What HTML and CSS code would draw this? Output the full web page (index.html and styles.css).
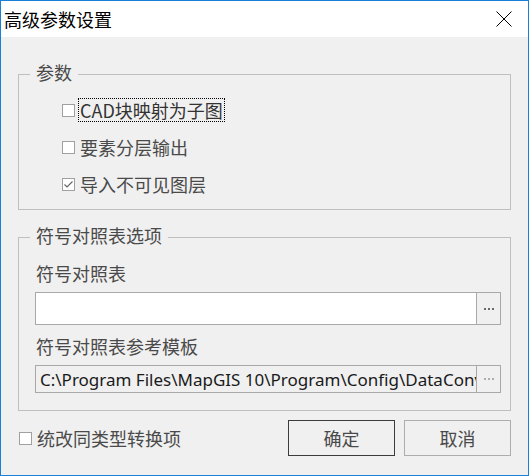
FILE: index.html
```html
<!DOCTYPE html>
<html lang="zh-CN">
<head>
<meta charset="utf-8">
<title>高级参数设置</title>
<link rel="stylesheet" href="styles.css">
</head>
<body>
<div class="window">
  <div class="titlebar">
    <span class="title">高级参数设置</span>
    <span class="close" aria-label="关闭">
      <svg width="16" height="16" viewBox="0 0 16 16"><path d="M0.5 0.5 L15.5 15.5 M15.5 0.5 L0.5 15.5" stroke="#000" stroke-width="1" fill="none"/></svg>
    </span>
  </div>
  <div class="content">
    <div class="group group-params">
      <div class="legend">参数</div>
      <div class="checks">
        <div class="check-row">
          <span class="box"></span>
          <span class="check-text focused">CAD块映射为子图</span>
        </div>
        <div class="check-row">
          <span class="box"></span>
          <span class="check-text">要素分层输出</span>
        </div>
        <div class="check-row">
          <span class="box checked">
            <svg width="11" height="11" viewBox="0 0 11 11"><path d="M1.5 5.5 L4 8 L9.5 2.5" stroke="#666" stroke-width="1.2" fill="none"/></svg>
          </span>
          <span class="check-text">导入不可见图层</span>
        </div>
      </div>
    </div>

    <div class="group group-symbols">
      <div class="legend">符号对照表选项</div>
      <div class="field-label first">符号对照表</div>
      <div class="filebox tall">
        <div class="file-input"></div>
        <div class="browse"><svg width="10" height="2" viewBox="0 0 10 2"><rect x="0" y="0" width="2" height="2" fill="#6a6a6a"/><rect x="4" y="0" width="2" height="2" fill="#6a6a6a"/><rect x="8" y="0" width="2" height="2" fill="#6a6a6a"/></svg></div>
      </div>
      <div class="field-label">符号对照表参考模板</div>
      <div class="filebox readonly">
        <div class="file-input"><span class="path">C:\Program Files\MapGIS 10\Program\Config\DataConvert\SymbolTemplate.xml</span></div>
        <div class="browse"><svg width="10" height="2" viewBox="0 0 10 2"><rect x="0" y="0.5" width="2" height="1" fill="#6a6a6a"/><rect x="4" y="0.5" width="2" height="1" fill="#6a6a6a"/><rect x="8" y="0.5" width="2" height="1" fill="#6a6a6a"/></svg></div>
      </div>
    </div>

    <div class="footer">
      <div class="footer-check">
        <span class="box small"></span>
        <span class="check-text">统改同类型转换项</span>
      </div>
      <div class="buttons">
        <button class="btn default">确定</button>
        <button class="btn">取消</button>
      </div>
    </div>
  </div>
</div>
</body>
</html>
```

FILE: styles.css
```css
* {
  box-sizing: border-box;
}

html, body {
  margin: 0;
  padding: 0;
  background: #f0f0f0;
}

body {
  font-family: "Noto Sans CJK SC", "Noto Sans", sans-serif;
  font-size: 18px;
  color: #4a4a4a;
}

.window {
  width: 529px;
  height: 476px;
  border: 1px solid #1a7fd6;
  background: #f0f0f0;
  display: flex;
  flex-direction: column;
}

.titlebar {
  height: 36px;
  background: #ffffff;
  display: flex;
  align-items: center;
  justify-content: space-between;
  padding-left: 3px;
  padding-right: 16px;
}

.title {
  color: #000;
  font-size: 18px;
  line-height: 24px;
}

.close {
  width: 16px;
  height: 16px;
  display: flex;
}

.content {
  padding: 37px 17px 0 17px;
  display: flex;
  flex-direction: column;
}

.group {
  border: 1px solid #bfbfbf;
  display: flex;
  flex-direction: column;
}

.legend {
  align-self: flex-start;
  margin: -13px 0 0 11px;
  padding: 0 6px;
  line-height: 20px;
  height: 20px;
  background: #f0f0f0;
  color: #4a4a4a;
}

.checks {
  display: flex;
  flex-direction: column;
  gap: 13px;
  padding: 16px 0 13px 43px;
}

.check-row {
  height: 24px;
  display: flex;
  align-items: center;
}

.box {
  width: 13px;
  height: 13px;
  border: 1px solid #a0a0a0;
  background: #ffffff;
  display: flex;
  align-items: center;
  justify-content: center;
  flex: none;
}

.box.small {
  width: 13px;
  height: 13px;
}

.check-text {
  margin-left: 5px;
  line-height: 22px;
  white-space: nowrap;
}

.check-text.focused {
  margin-left: 3px;
  padding: 0 1px;
  border: 1px dotted #000;
  height: 24px;
  color: #333;
}

.group-symbols {
  margin-top: 27px;
  padding-bottom: 17px;
}

.field-label {
  padding-left: 17px;
  margin-top: 9px;
  line-height: 24px;
  height: 24px;
}

.field-label.first {
  margin-top: 16px;
}

.filebox {
  margin: 7px 0 0 16px;
  width: 466px;
  height: 28px;
  border: 1px solid #a9a9a9;
  display: flex;
}

.filebox.tall {
  height: 33px;
}

.file-input {
  flex: 1;
  background: #ffffff;
  overflow: hidden;
  white-space: nowrap;
  display: flex;
  align-items: center;
  padding-left: 4px;
}

.filebox.readonly .file-input {
  background: #f0f0f0;
}

.path {
  font-family: "Noto Sans", "Open Sans", sans-serif;
  font-size: 17px;
  color: #1a1a1a;
}

.browse {
  width: 24px;
  flex: none;
  border-left: 1px solid #a9a9a9;
  background: #f0f0f0;
  display: flex;
  align-items: center;
  justify-content: center;
}

.footer {
  margin-top: 9px;
  display: flex;
  align-items: center;
  justify-content: space-between;
}

.footer-check {
  display: flex;
  align-items: center;
  padding-left: 1px;
}

.buttons {
  display: flex;
  gap: 9px;
}

.btn {
  width: 107px;
  height: 36px;
  border: 1px solid #adadad;
  background: #f0f0f0;
  font-family: "Noto Sans CJK SC", sans-serif;
  font-size: 18px;
  color: #4a4a4a;
  padding: 0;
}

.btn.default {
  border-color: #3c3c3c;
}
```
